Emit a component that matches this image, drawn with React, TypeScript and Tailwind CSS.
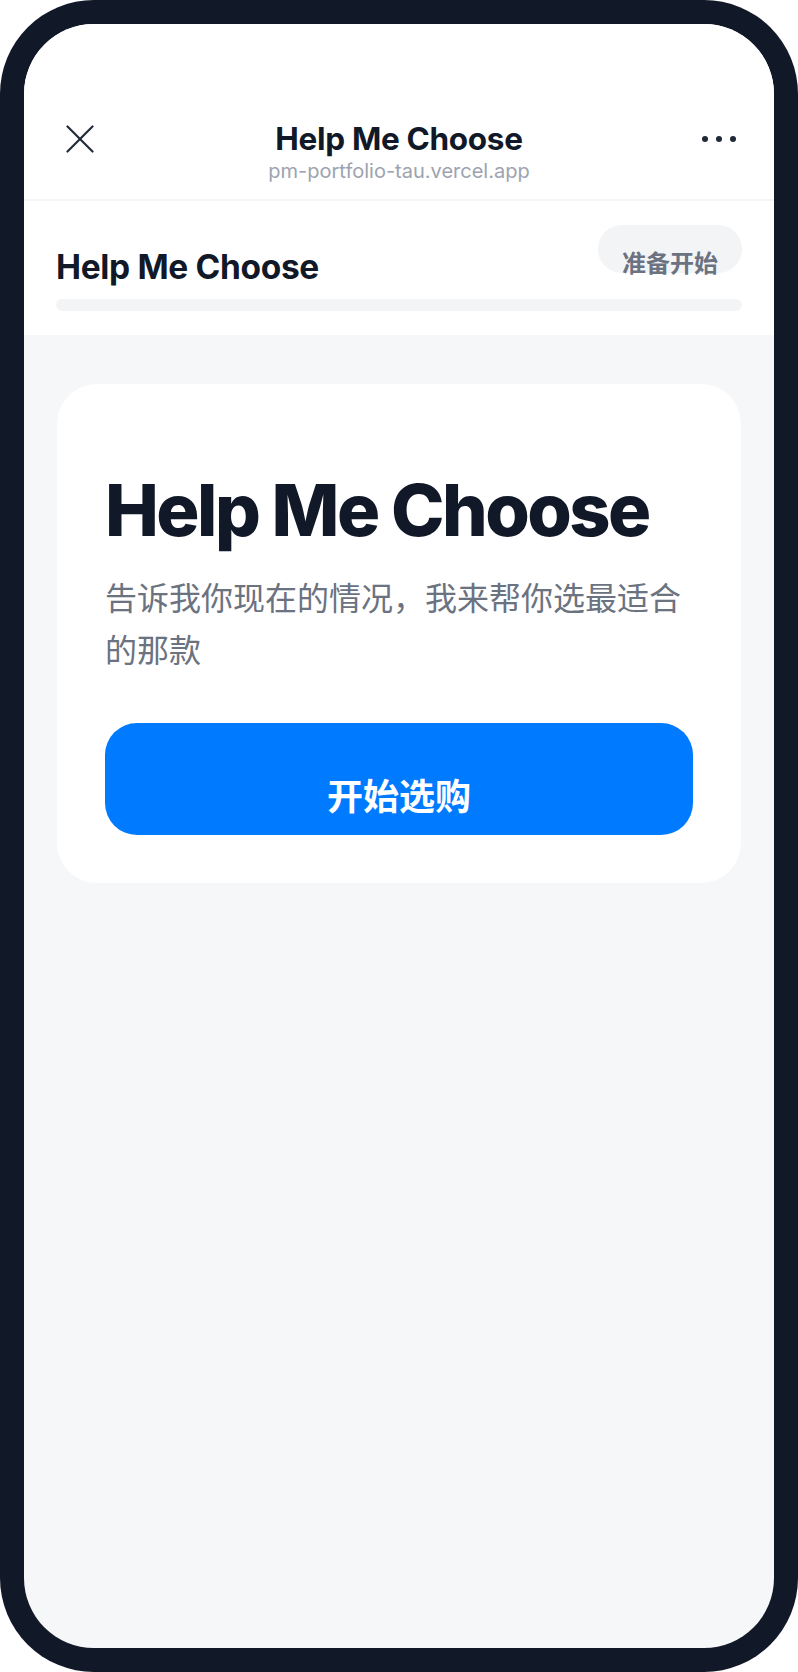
export default function App() {
  return (
    <div className="w-[798px] h-[1672px] bg-white font-['Inter','Noto_Sans_CJK_SC',sans-serif]">
      {/* Phone frame */}
      <div className="h-full w-full rounded-[94px] bg-[#111827] p-[24px]">
        <div className="flex h-full flex-col overflow-hidden rounded-[70px] bg-[#f6f7f9]">
          {/* Nav bar */}
          <div className="relative border-b-2 border-[#f3f4f6] bg-white pt-[96px] pb-[16px]">
            <button className="absolute left-[40px] top-[99px] flex h-[32px] w-[32px] items-center justify-center">
              <svg width="28" height="28" viewBox="0 0 28 28" fill="none" stroke="#1f2937" strokeWidth="2.2" strokeLinecap="round">
                <line x1="1.5" y1="1.5" x2="26.5" y2="26.5" />
                <line x1="26.5" y1="1.5" x2="1.5" y2="26.5" />
              </svg>
            </button>
            <div className="text-center">
              <h1 className="text-[31.5px] leading-[38.5px] font-bold text-[#111827] tracking-[-0.01em]">Help Me Choose</h1>
              <p className="text-[20px] leading-[24px] text-[#9ca3af]">pm-portfolio-tau.vercel.app</p>
            </div>
            <div className="absolute right-[38px] top-[112px] flex gap-[8px]">
              <span className="h-[6px] w-[6px] rounded-full bg-[#1f2937]" />
              <span className="h-[6px] w-[6px] rounded-full bg-[#1f2937]" />
              <span className="h-[6px] w-[6px] rounded-full bg-[#1f2937]" />
            </div>
          </div>

          {/* Step header */}
          <div className="bg-white px-8 pt-[24px] pb-6">
            <div className="flex items-start justify-between">
              <h2 className="mt-[22px] text-[33.5px] leading-[40px] font-bold text-[#111827] tracking-[-0.01em]">Help Me Choose</h2>
              <span className="h-[48px] rounded-full bg-[#f3f4f6] px-6 pt-[23px] text-[24px] leading-[32px] font-semibold text-[#6b7280]">
                准备开始
              </span>
            </div>
            <div className="mt-3 h-3 w-full rounded-full bg-[#f3f4f6]" />
          </div>

          {/* Content */}
          <div className="flex-1 px-[33px] pt-[49px]">
            <div className="rounded-[40px] bg-white px-12 pt-[86px] pb-[48px]">
              <h3 className="text-[72px] leading-[1.1] font-extrabold tracking-[-0.035em] text-[#111827]">Help Me Choose</h3>
              <p className="mt-6 text-[32px] leading-[52px] text-[#6b7280]">告诉我你现在的情况，我来帮你选最适合的那款</p>
              <button className="mt-[46px] h-[112px] w-full rounded-[32px] bg-[#007aff] pt-[50px] pb-[14px] text-[36px] leading-[48px] font-bold text-white">
                开始选购
              </button>
            </div>
          </div>
        </div>
      </div>
    </div>
  );
}
